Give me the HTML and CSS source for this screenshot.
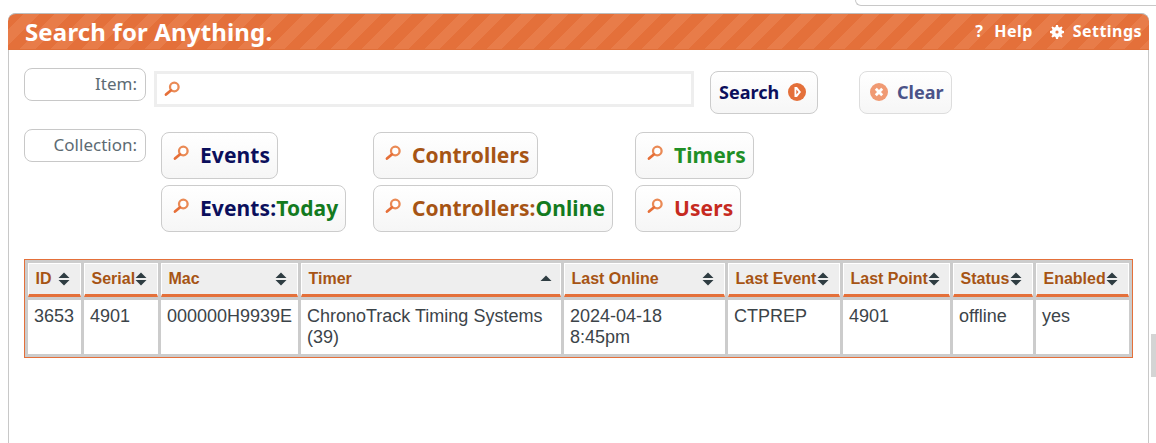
FILE: index.html
```html
<!DOCTYPE html>
<html lang="en">
<head>
<meta charset="utf-8">
<title>Search for Anything.</title>
<link rel="stylesheet" href="styles.css">
</head>
<body>
<svg class="defs" width="0" height="0" aria-hidden="true">
  <symbol id="mag" viewBox="0 0 16 16">
    <circle cx="10.300" cy="6" r="4.300" fill="#fff" stroke="#ea8a55" stroke-width="2.300"/>
    <path d="M6.800 9.500 2 13.500" stroke="#e66f38" stroke-width="2.800" stroke-linecap="round" fill="none"/>
  </symbol>
  <symbol id="sort" viewBox="0 0 12 14">
    <path d="M6 0.500 11.500 6H0.500Z M0.500 8H11.500L6 13.500Z" fill="#2f3d42"/>
  </symbol>
  <symbol id="up" viewBox="0 0 12 14">
    <path d="M6 3.500 11.500 9H0.500Z" fill="#2f3d42"/>
  </symbol>
</svg>
<div class="topbar"><div class="topbox"></div></div>
<main class="panel">
  <header class="head">
    <h1 class="title">Search for Anything.</h1>
    <nav class="links">
      <a class="link link-help"><span class="q">?</span>Help</a>
      <a class="link">
        <svg class="gear" viewBox="0 0 14 14"><path d="M6 0h2l.4 2 1.300.5L11.400 1.400 12.600 2.600 11.500 4.300 12 5.600 14 6v2l-2 .4-.5 1.300 1.100 1.700-1.200 1.200-1.700-1.100-1.300.5L8 14H6l-.4-2-1.300-.5-1.700 1.100-1.200-1.200 1.100-1.700L2 8.400 0 8V6l2-.4.500-1.300-1.100-1.700L2.600 1.400 4.300 2.500 5.600 2Z" fill="#fff"/><circle cx="7" cy="7" r="1.600" fill="#e77b48"/></svg>Settings</a>
    </nav>
  </header>

  <section class="row-item">
    <div class="label">Item:</div>
    <div class="input"><svg class="mag"><use href="#mag"/></svg></div>
    <button class="btn btn-search">Search
      <svg class="go" viewBox="0 0 18 18"><circle cx="9" cy="9" r="9" fill="#e4703a"/><path d="M6.500 4h2.500l4 5-4 5H6.500Z" fill="#fff"/><path d="M8.300 6.500 10.500 9 8.300 11.500Z" fill="#e4703a"/></svg>
    </button>
    <button class="btn btn-clear">
      <svg class="x" viewBox="0 0 18 18"><circle cx="9" cy="9" r="9" fill="#f09a73"/><path d="M5.800 5.800 12.200 12.200M12.200 5.800 5.800 12.200" stroke="#fff" stroke-width="2.800"/></svg>Clear
    </button>
  </section>

  <section class="row-coll">
    <div class="label">Collection:</div>
    <div class="colls">
      <div class="coll coll-a">
        <a class="chip navy"><svg class="mag"><use href="#mag"/></svg>Events</a>
        <a class="chip navy"><svg class="mag"><use href="#mag"/></svg>Events:<span class="green">Today</span></a>
      </div>
      <div class="coll coll-b">
        <a class="chip brown"><svg class="mag"><use href="#mag"/></svg>Controllers</a>
        <a class="chip brown"><svg class="mag"><use href="#mag"/></svg>Controllers:<span class="green">Online</span></a>
      </div>
      <div class="coll">
        <a class="chip lime"><svg class="mag"><use href="#mag"/></svg>Timers</a>
        <a class="chip red"><svg class="mag"><use href="#mag"/></svg>Users</a>
      </div>
    </div>
  </section>

  <div class="table-wrap">
    <table class="grid">
      <colgroup>
        <col class="c1"><col class="c2"><col class="c3"><col class="c4"><col class="c5"><col class="c6"><col class="c7"><col class="c8"><col class="c9">
      </colgroup>
      <thead>
        <tr>
          <th><div class="th">ID<svg class="sort"><use href="#sort"/></svg></div></th>
          <th><div class="th">Serial<svg class="sort"><use href="#sort"/></svg></div></th>
          <th><div class="th">Mac<svg class="sort"><use href="#sort"/></svg></div></th>
          <th><div class="th th-sorted">Timer<svg class="sort"><use href="#up"/></svg></div></th>
          <th><div class="th">Last Online<svg class="sort"><use href="#sort"/></svg></div></th>
          <th><div class="th">Last Event<svg class="sort"><use href="#sort"/></svg></div></th>
          <th><div class="th">Last Point<svg class="sort"><use href="#sort"/></svg></div></th>
          <th><div class="th">Status<svg class="sort"><use href="#sort"/></svg></div></th>
          <th><div class="th">Enabled<svg class="sort"><use href="#sort"/></svg></div></th>
        </tr>
      </thead>
      <tbody>
        <tr>
          <td>3653</td>
          <td>4901</td>
          <td>000000H9939E</td>
          <td>ChronoTrack Timing Systems (39)</td>
          <td>2024-04-18<br>8:45pm</td>
          <td>CTPREP</td>
          <td>4901</td>
          <td>offline</td>
          <td>yes</td>
        </tr>
      </tbody>
    </table>
  </div>
</main>
<div class="thumb"></div>
</body>
</html>
```
FILE: styles.css
```css
* { box-sizing: border-box; }
html, body { margin: 0; padding: 0; height: 100%; overflow: hidden; }
body { background: #fff; font-family: "Liberation Sans", Arial, sans-serif; color: #3c4449; position: relative; }
.defs { position: absolute; }

.topbar { height: 13px; }
.topbox { height: 6px; margin-left: 855px; border: 1px solid #c8c8c8; border-top: 0; border-right: 0; border-bottom-left-radius: 6px; }

.panel { width: 1141px; height: 430px; margin-left: 8px; border: 1px solid #c8c8c8; border-bottom: 0; border-radius: 8px 8px 0 0; }

.head {
  height: 37px; margin: -1px -1px 0; padding: 0 7px 0 17px;
  display: flex; align-items: center; justify-content: space-between;
  border-radius: 8px 8px 0 0; border-top: 1px solid #bdbdbd; border-bottom: 1px solid #e0703a;
  background: repeating-linear-gradient(135deg, #e4703a 0 11px, #e87c49 11px 22px);
  color: #fff;
}
.title { margin: 0; font: bold 24px/36px "Noto Sans", sans-serif; letter-spacing: .15px; }
.links { display: flex; gap: 17px; margin-top: -2px; }
.link { display: flex; align-items: center; font: bold 16px "Noto Sans", sans-serif; letter-spacing: .45px; }
.q { margin-right: 11px; }
.gear { width: 14px; height: 14px; margin-right: 9px; margin-top: 3px; }

.row-item { display: flex; align-items: flex-start; padding: 18px 0 0 15px; height: 79px; }
.label {
  width: 122px; height: 33px; border: 1px solid #c8c8c8; border-radius: 8px;
  text-align: right; padding: 0 8px 1px; font: 17px/30px "Noto Sans", sans-serif; color: #5d6b73;
}
.input { width: 540px; height: 36px; margin: 3px 0 0 8px; border: 3px solid #eee; display: flex; align-items: center; padding-left: 7px; }
.mag { width: 16px; height: 16px; flex: none; }

.btn {
  height: 43px; margin-top: 3px; border: 1px solid #ccc; border-radius: 8px;
  background: linear-gradient(#fff, #f6f6f6); display: flex; align-items: center;
  font: bold 18px/24px "Noto Sans", sans-serif; padding: 0 0 2px;
}
.btn-search { width: 108px; margin-left: 16px; color: #0b0f5c; padding-left: 8px; gap: 9px; }
.go, .x { width: 18px; height: 18px; }
.btn-clear { width: 93px; margin-left: 41px; color: #4b5388; padding-left: 10px; gap: 9px; border-color: #ddd; }

.row-coll { display: flex; align-items: flex-start; padding-left: 15px; height: 130px; }
.colls { display: flex; gap: 23px; margin: 3px 0 0 15px; }
.coll { display: flex; flex-direction: column; align-items: flex-start; gap: 6px; }
.coll-a { width: 189px; }
.coll-b { width: 239px; }
.chip {
  height: 47px; border: 1px solid #ccc; border-radius: 8px; background: linear-gradient(#fff, #f6f6f6);
  display: flex; align-items: center; padding: 0 7px 2px 11px;
  font: bold 21px "Noto Sans", sans-serif; letter-spacing: .1px; white-space: nowrap;
}
.chip .mag { margin-right: 11px; margin-top: -4px; }
.navy { color: #0b0f5c; }
.brown { color: #a65414; }
.green { color: #137a1f; }
.lime { color: #1f8f26; }
.red { color: #c62a1f; }

.table-wrap { margin: 0 0 0 15px; width: 1109px; }
.grid { width: 1109px; table-layout: fixed; border-collapse: separate; border-spacing: 3px; background: #ccc; border: 1px solid #e4703a; font-size: 18px; }
.c1 { width: 53px; } .c2 { width: 74px; } .c3 { width: 137px; } .c4 { width: 260px; } .c5 { width: 161px; }
.c6 { width: 112px; } .c7 { width: 107px; } .c8 { width: 80px; } .c9 { width: 93px; }
th { padding: 0; background: #eee; border: 1px solid #fff; border-bottom: 3px solid #e4703a; height: 34px; text-align: left; color: #a65414; font-size: 16px; }
.th { display: flex; align-items: center; justify-content: space-between; padding: 0 10px 0 6.500px; height: 30px; white-space: nowrap; }
.th-sorted { padding-right: 8px; }
.sort { width: 12px; height: 14px; flex: none; }
td { padding: 6px 6px 0; background: #fff; height: 54px; vertical-align: top; line-height: 21px; color: #3c4449; }

.thumb { position: absolute; left: 1151px; top: 334px; width: 5px; height: 43px; background: #d4d4d4; }
```
